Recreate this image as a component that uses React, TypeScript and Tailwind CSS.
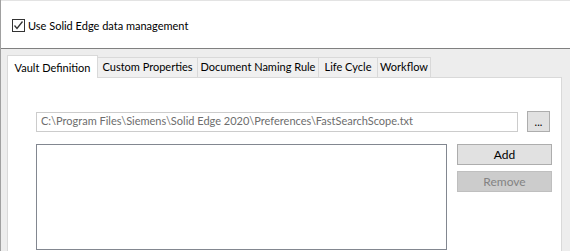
import React from "react";

function CheckBox() {
  return (
    <span className="shrink-0 w-[13px] h-[13px] border border-[#333333] bg-white flex items-center justify-center">
      <svg width="11" height="11" viewBox="0 0 11 11">
        <path d="M1.5 5.5 L4 8.5 L9.5 1.5" fill="none" stroke="#333333" strokeWidth="1.3" />
      </svg>
    </span>
  );
}

const tabs = [
  { label: "Custom Properties", w: "w-[100px]" },
  { label: "Document Naming Rule", w: "w-[121px]" },
  { label: "Life Cycle", w: "w-[59px]" },
  { label: "Workflow", w: "w-[53px]" },
];

export default function App() {
  return (
    <div className="w-[570px] h-[251px] overflow-hidden bg-[#ededed] border-l border-[#a0a0a0] font-['Lato',sans-serif] text-[11px] text-black whitespace-nowrap">
      <div className="h-[49px] bg-white border-t border-[#e3e3e3] border-b border-b-[#808080] flex items-start pl-[11px] gap-[3px] pt-[18px]">
        <CheckBox />
        <span className="leading-[14px]">Use Solid Edge data management</span>
      </div>

      <div className="pl-[6px] pt-[6px] w-[561px]">
        <div className="flex items-end h-[22px] relative z-10">
          <div className="shrink-0 w-[91px] h-[23px] -mb-[1px] bg-white border border-b-0 border-[#d9d9d9] flex justify-center pt-[4px]">
            Vault Definition
          </div>
          {tabs.map((t) => (
            <div
              key={t.label}
              className={`${t.w} shrink-0 h-[20px] border-t border-r border-[#d9d9d9] bg-[#f0f0f0] flex justify-center items-center`}
            >
              {t.label}
            </div>
          ))}
        </div>

        <div className="h-[180px] bg-white border border-[#d9d9d9] pl-[28px] pt-[33px]">
          <div className="flex items-center">
            <div className="shrink-0 w-[482px] h-[20px] border border-[#cccccc] bg-white text-[#6d6d6d] pl-[4px] flex items-center overflow-hidden">
              C:\Program Files\Siemens\Solid Edge 2020\Preferences\FastSearchScope.txt
            </div>
            <div className="shrink-0 ml-[9px] w-[23px] h-[21px] border border-[#adadad] bg-[#e1e1e1] flex items-center justify-center pt-[1px]">
              ...
            </div>
          </div>

          <div className="flex mt-[12px]">
            <div className="shrink-0 w-[411px] h-[106px] border border-[#828790] bg-white" />
            <div className="ml-[10px] flex flex-col gap-[6px]">
              <div className="w-[95px] h-[21px] border border-[#adadad] bg-[#e1e1e1] flex items-center justify-center text-[12px]">
                Add
              </div>
              <div className="w-[95px] h-[21px] border border-[#bfbfbf] bg-[#cccccc] text-[#838383] flex items-center justify-center text-[12px]">
                Remove
              </div>
            </div>
          </div>
        </div>
      </div>
    </div>
  );
}
